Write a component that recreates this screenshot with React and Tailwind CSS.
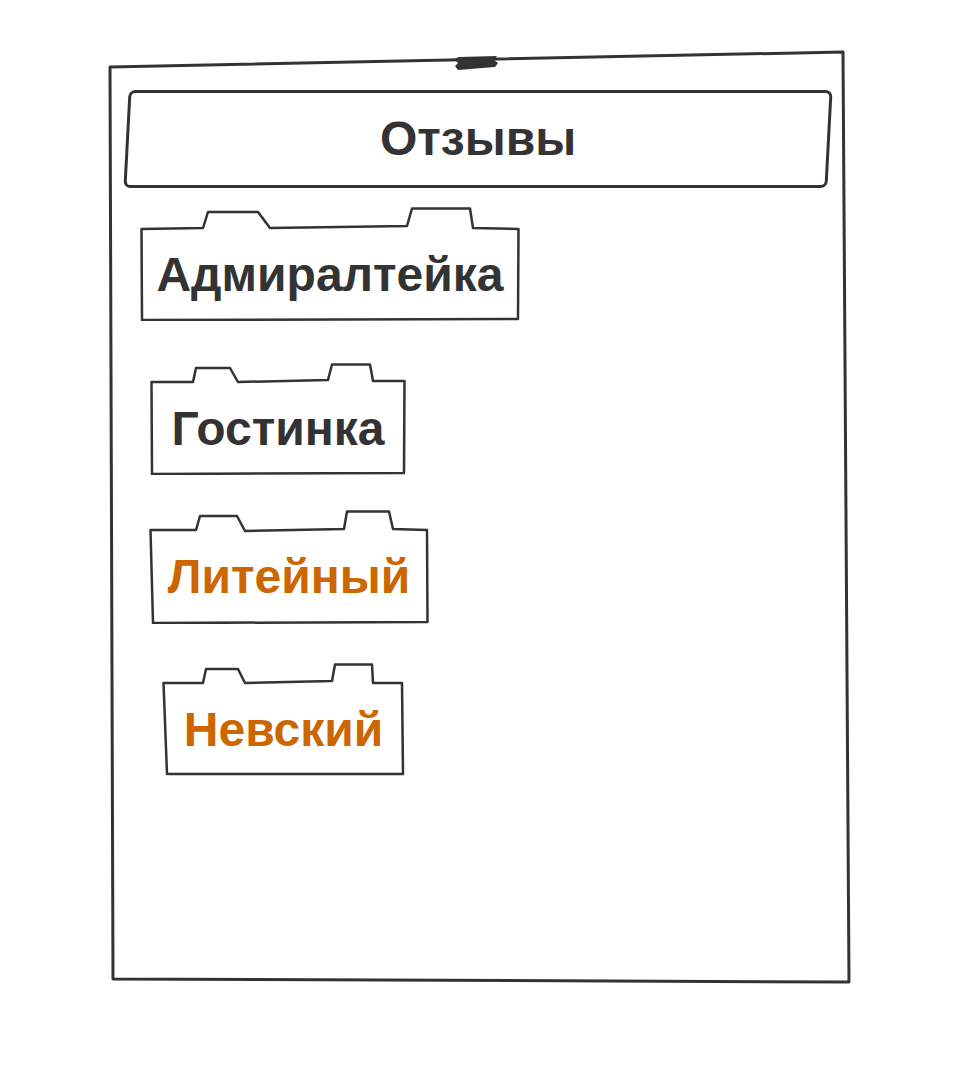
const font = { fontFamily: '"Liberation Sans", Arial, sans-serif' };

const folders = [
  {
    label: "Адмиралтейка",
    color: "text-[#333333]",
    box: "ml-[32px] mt-[19px] w-[380px] h-[114px] pt-[22px]",
    w: 380,
    h: 114,
    d: "M1.5 22 L63 21 L68 5 L118 5 L130 21 L267 19 L272 1.5 L330 1.5 L333 21 L378.5 22 L378 112 L2 113 Z",
  },
  {
    label: "Гостинка",
    color: "text-[#333333]",
    box: "ml-[42px] mt-[42px] w-[256px] h-[112px] pt-[19px]",
    w: 256,
    h: 112,
    d: "M1.5 19 L43 19 L46 5 L80 5 L88 19 L178 17 L182 1.5 L220 1.5 L223 18 L254.5 18 L254 110 L2 111 Z",
  },
  {
    label: "Литейный",
    color: "text-[#cc6600]",
    box: "ml-[41px] mt-[35px] w-[280px] h-[114px] pt-[20px]",
    w: 280,
    h: 114,
    d: "M1.5 20 L47 20 L51 6 L88 6 L96 21 L195 19 L198 1.5 L240 1.5 L244 19 L278 20 L278.5 112 L4 113 Z",
  },
  {
    label: "Невский",
    color: "text-[#cc6600]",
    box: "ml-[54px] mt-[39px] w-[243px] h-[113px] pt-[20px]",
    w: 243,
    h: 113,
    d: "M1.5 20 L41 20 L44 6 L76 6 L83 20 L170 18 L173 1.5 L210 1.5 L211 20 L240 20 L241 111 L5 111 Z",
  },
];

const Folder = ({ item }) => {
  return (
    <div className={`relative shrink-0 ${item.box}`}>
      <svg
        className="absolute inset-0 pointer-events-none"
        width={item.w}
        height={item.h}
        viewBox={`0 0 ${item.w} ${item.h}`}
      >
        <path d={item.d} fill="white" stroke="#333" strokeWidth="2.5" strokeLinejoin="round" />
      </svg>
      <div className="relative h-full flex items-center justify-center">
        <span className={`text-[48px] leading-none font-bold ${item.color}`} style={font}>
          {item.label}
        </span>
      </div>
    </div>
  );
};

export default function App() {
  return (
    <div className="min-h-screen w-full bg-white overflow-hidden" style={font}>
      <div className="relative ml-[108px] mt-[50px] w-[744px] h-[936px] flex flex-col items-start">
        {/* hand drawn window outline */}
        <svg className="absolute inset-0 pointer-events-none" width="744" height="936" viewBox="0 0 744 936">
          <path d="M2 17 L735 2 L741 932 L5 929 Z" fill="none" stroke="#333" strokeWidth="3" strokeLinejoin="round" />
          <path d="M346 9 L351 7 L389 6 L386 10 L390 13 L387 17 L350 20 L347 16 L350 13 Z" fill="#333" />
        </svg>

        <div className="relative mt-[40px] ml-[18px] w-[704px] h-[98px] border-[3px] border-[#333] rounded-[7px] -skew-x-3 flex items-center justify-center bg-white">
          <span className="skew-x-3 text-[48px] leading-none font-bold text-[#333333]">Отзывы</span>
        </div>

        {folders.map((item) => (
          <Folder key={item.label} item={item} />
        ))}
      </div>
    </div>
  );
}
